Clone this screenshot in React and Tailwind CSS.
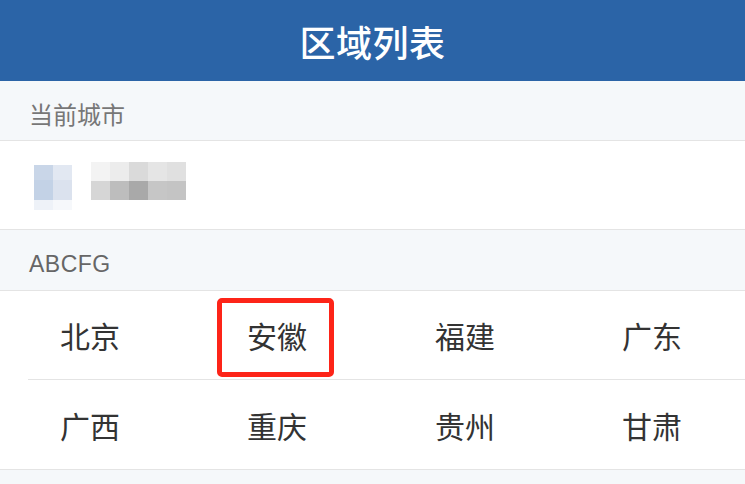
import React from "react";

function Pix({ cells, cw, ch }) {
  return (
    <div className="flex flex-col">
      {cells.map((row, i) => (
        <div key={i} className="flex">
          {row.map((c, j) => (
            <div key={j} style={{ width: cw[j], height: ch[i], background: c }} />
          ))}
        </div>
      ))}
    </div>
  );
}

const rows = [
  ["北京", "安徽", "福建", "广东"],
  ["广西", "重庆", "贵州", "甘肃"],
];

export default function App() {
  return (
    <div className="w-[745px] h-[484px] bg-[#f5f8fa] overflow-hidden font-['Noto_Sans_CJK_SC',sans-serif]">
      <div className="h-[81px] bg-[#2b64a7] flex items-center justify-center">
        <span className="text-white text-[36px] leading-none tracking-[0.5px] font-medium">区域列表</span>
      </div>
      <div className="h-[60px] flex items-center pl-[29px] pt-[6px] text-[24px] text-[#777] border-b border-[#e4e4e4]">
        当前城市
      </div>
      <div className="h-[89px] bg-white border-b border-[#e4e4e4] flex items-start pt-[21px] pl-[34px]">
        <div className="mt-[3px]">
          <Pix
            cells={[
              ["#c9d6e8", "#e2e8f2"],
              ["#c3d2e6", "#dbe2ee"],
              ["#eef2f8", "#f6f8fb"],
            ]}
            cw={[19, 19]}
            ch={[15, 20, 10]}
          />
        </div>
        <div className="ml-[19px]">
          <Pix
            cells={[
              ["#f3f3f3", "#ececec", "#dadada", "#e5e5e5", "#e0e0e0"],
              ["#d6d6d6", "#bdbdbd", "#a9a9a9", "#c6c6c6", "#c4c4c4"],
            ]}
            cw={[19, 19, 19, 19, 19]}
            ch={[19, 19]}
          />
        </div>
      </div>
      <div className="h-[61px] flex items-center pl-[29px] pt-[8px] text-[23px] text-[#666] border-b border-[#e4e4e4] font-['Liberation_Sans',sans-serif] tracking-[0.5px]">
        ABCFG
      </div>
      <div className="bg-white border-b border-[#e4e4e4]">
        {rows.map((r, i) => (
          <div key={i} className={"ml-[28px] h-[89px] flex items-center " + (i === 0 ? "border-b border-[#e4e4e4]" : "")}>
            <div className="grid grid-cols-[187px_188px_187px_160px] pl-[32px] w-full">
              {r.map((c) => (
                <div key={c} className="relative text-[30px] text-[#333] leading-none">
                  {c}
                  {c === "安徽" && (
                    <div className="absolute left-[-30px] top-[-22px] w-[117px] h-[79px] border-[5px] border-solid border-[#fd2418] rounded-[5px]" />
                  )}
                </div>
              ))}
            </div>
          </div>
        ))}
      </div>
    </div>
  );
}
